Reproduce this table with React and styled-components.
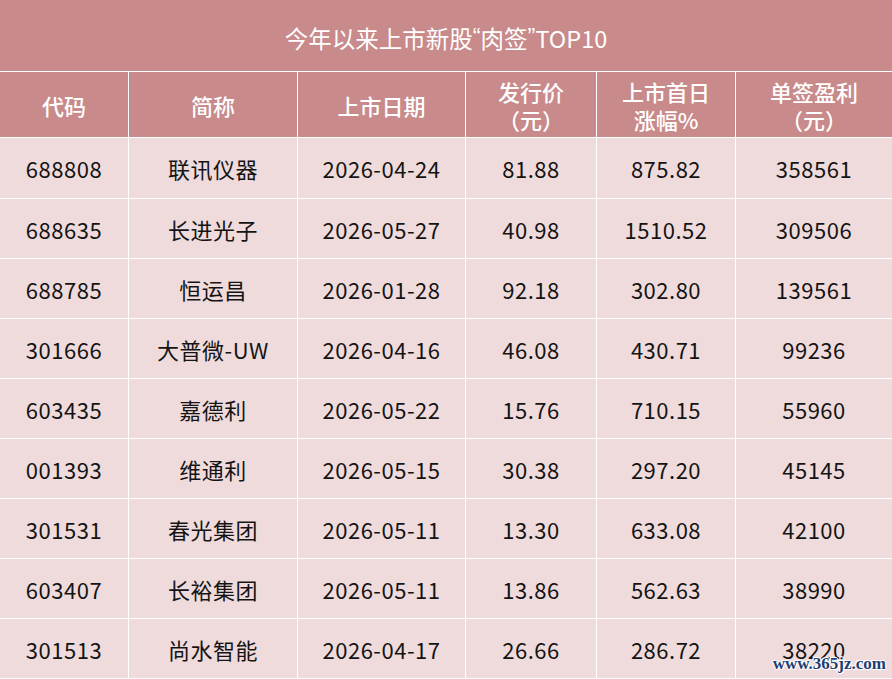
import React from 'react'
import styled, {createGlobalStyle} from 'styled-components'

const Rose = '#c88a8a'
const Blush = '#f0dbdc'

const GlobalStyle = createGlobalStyle`
html, body {
  margin: 0;
  padding: 0;
  background: #fff;
  font-family: "Noto Sans CJK SC", "Noto Sans", sans-serif;
}
`
const Page = styled.div`
position: relative;
width: 892px;
height: 679px;
overflow: hidden;
background: #fff;
`
const Grid = styled.div`
display: grid;
grid-template-columns: 128px 168px 167px 130px 138px 156px;
grid-template-rows: 71px 65px 60px;
grid-auto-rows: 59px;
gap: 1px;
background: #fff;
`
const Title = styled.div`
grid-column: 1 / -1;
background: ${Rose};
color: #fff;
font-size: 23.5px;
display: flex;
align-items: center;
justify-content: center;
padding-top: 4px;
`
const Quote = styled.span`
font-family: "Liberation Sans", sans-serif;
`
const Head = styled.div`
background: ${Rose};
color: #fff;
font-size: 22px;
font-weight: 500;
line-height: 28px;
white-space: pre-line;
text-align: center;
display: flex;
align-items: center;
justify-content: center;
`
const Cell = styled.div`
background: ${Blush};
color: #141414;
font-size: 22px;
letter-spacing: 0.5px;
display: flex;
align-items: center;
justify-content: center;
`
const Watermark = styled.div`
position: absolute;
right: 6px;
bottom: 5px;
font-family: "Liberation Serif", serif;
font-weight: bold;
font-size: 17px;
color: #1d3f73;
text-shadow: -1px 0 #fff, 1px 0 #fff, 0 -1px #fff, 0 1px #fff, 1px 1px #fff, -1px -1px #fff;
`

const heads = ['代码', '简称', '上市日期', '发行价\n（元）', '上市首日\n涨幅%', '单签盈利\n（元）']

const rows = [
  ['688808', '联讯仪器', '2026-04-24', '81.88', '875.82', '358561'],
  ['688635', '长进光子', '2026-05-27', '40.98', '1510.52', '309506'],
  ['688785', '恒运昌', '2026-01-28', '92.18', '302.80', '139561'],
  ['301666', '大普微-UW', '2026-04-16', '46.08', '430.71', '99236'],
  ['603435', '嘉德利', '2026-05-22', '15.76', '710.15', '55960'],
  ['001393', '维通利', '2026-05-15', '30.38', '297.20', '45145'],
  ['301531', '春光集团', '2026-05-11', '13.30', '633.08', '42100'],
  ['603407', '长裕集团', '2026-05-11', '13.86', '562.63', '38990'],
  ['301513', '尚水智能', '2026-04-17', '26.66', '286.72', '38220'],
]

export default function App() {
  return (
    <Page>
      <GlobalStyle />
      <Grid>
        <Title>今年以来上市新股<Quote>“</Quote>肉签<Quote>”</Quote>TOP10</Title>
        {heads.map(h => <Head key={h}>{h}</Head>)}
        {rows.map((r, ri) => r.map((v, ci) => (
          <Cell key={ri + '-' + ci}>{v}</Cell>
        )))}
      </Grid>
      <Watermark>www.365jz.com</Watermark>
    </Page>
  )
}
